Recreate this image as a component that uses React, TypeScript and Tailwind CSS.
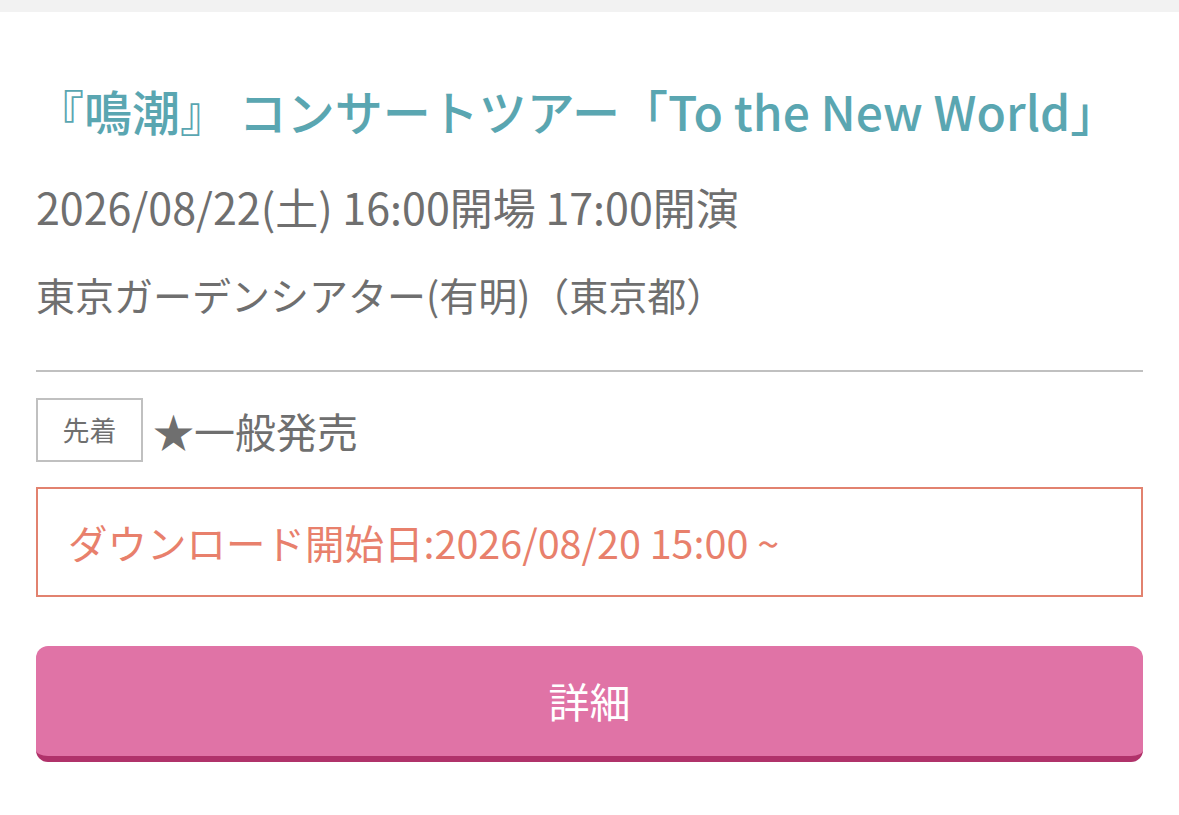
const jp = "font-['Noto_Sans_CJK_JP','Noto_Sans',sans-serif]";

export default function App() {
  return (
    <div className={`${jp} bg-white min-h-screen w-full`}>
      <div className="h-3 bg-[#f2f2f2]" />

      <div className="px-9 pt-[62px]">
        <h1 className="text-[48px] leading-[72px] font-medium text-[#5aa6b1] whitespace-nowrap">
          『鳴潮』 コンサートツアー「To the New World」
        </h1>

        <p className="mt-[30px] text-[43px] leading-[60px] text-[#6f6f6f] whitespace-nowrap">
          2026/08/22(土) 16:00開場 17:00開演
        </p>

        <p className="mt-[28px] text-[39px] leading-[60px] text-[#6f6f6f] whitespace-nowrap">
          東京ガーデンシアター(有明)（東京都）
        </p>

        <div className="mt-[46px] h-[2px] bg-[#c0c0c0]" />

        <div className="mt-[26px] flex items-center gap-[10px]">
          <span className="flex h-16 w-[107px] items-center justify-center border-2 border-[#c0c0c0] text-[27px] text-[#6f6f6f]">
            先着
          </span>
          <span className="text-[41px] leading-none text-[#6f6f6f]">★一般発売</span>
        </div>

        <div className="mt-[25px] flex h-[110px] items-center border-2 border-[#e2826f] px-[30px]">
          <span className="text-[39.5px] text-[#e8806c] whitespace-nowrap">
            ダウンロード開始日:2026/08/20 15:00 ~
          </span>
        </div>

        <button className="mt-[49px] flex h-[116px] w-full items-center justify-center rounded-xl border-b-[6px] border-[#b0326a] bg-[#e073a6] text-[41px] text-white">
          詳細
        </button>
      </div>
    </div>
  );
}
